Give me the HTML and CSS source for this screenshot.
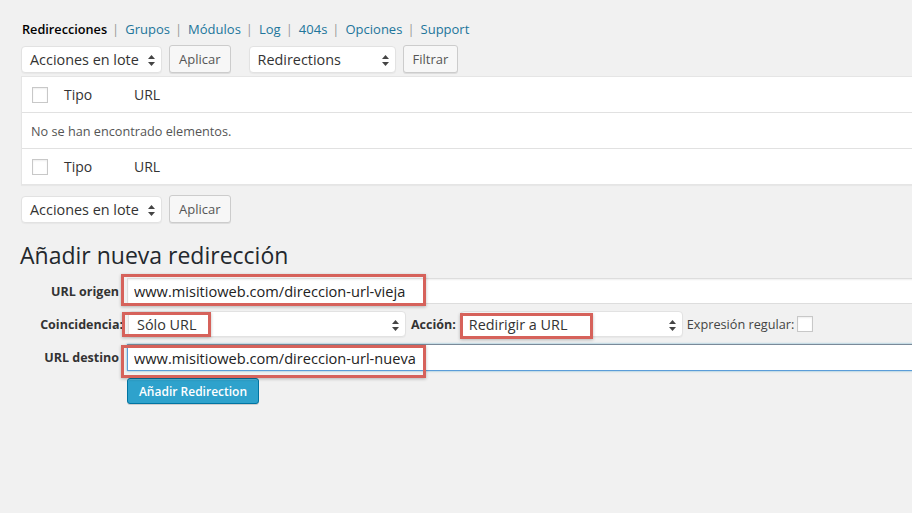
FILE: index.html
```html
<!DOCTYPE html>
<html lang="es">
<head>
    <meta charset="UTF-8">
    <meta name="viewport" content="width=device-width, initial-scale=1.0">
    <title>Redirection</title>
    <link rel="stylesheet" href="styles.css">
</head>
<body>
    <div class="wrap">
        <ul class="subsubsub">
            <li class="current">Redirecciones</li>
            <li><a href="#">Grupos</a></li>
            <li><a href="#">Módulos</a></li>
            <li><a href="#">Log</a></li>
            <li><a href="#">404s</a></li>
            <li><a href="#">Opciones</a></li>
            <li><a href="#">Support</a></li>
        </ul>

        <div class="tablenav top">
            <div class="select bulk">Acciones en lote <svg class="arrows" width="7" height="11" viewBox="0 0 7 11"><path d="M3.5 0L7 4H0z M3.5 11L0 7h7z" fill="#444"/></svg></div>
            <button class="button">Aplicar</button>
            <div class="select groups">Redirections <svg class="arrows" width="7" height="11" viewBox="0 0 7 11"><path d="M3.5 0L7 4H0z M3.5 11L0 7h7z" fill="#444"/></svg></div>
            <button class="button">Filtrar</button>
        </div>

        <div class="list-table">
            <div class="row head">
                <span class="check"></span>
                <span class="col-type">Tipo</span>
                <span class="col-url">URL</span>
            </div>
            <div class="row empty">No se han encontrado elementos.</div>
            <div class="row foot">
                <span class="check"></span>
                <span class="col-type">Tipo</span>
                <span class="col-url">URL</span>
            </div>
        </div>

        <div class="tablenav bottom">
            <div class="select bulk">Acciones en lote <svg class="arrows" width="7" height="11" viewBox="0 0 7 11"><path d="M3.5 0L7 4H0z M3.5 11L0 7h7z" fill="#444"/></svg></div>
            <button class="button">Aplicar</button>
        </div>

        <h2>Añadir nueva redirección</h2>

        <form class="add-form">
            <div class="form-row">
                <label class="lbl">URL origen</label>
                <div class="field">
                    <input class="text" type="text" value="www.misitioweb.com/direccion-url-vieja">
                    <span class="mark mark-source"></span>
                </div>
            </div>
            <div class="form-row options">
                <label class="lbl wide">Coincidencia:</label>
                <div class="field">
                    <div class="select match">Sólo URL <svg class="arrows" width="7" height="11" viewBox="0 0 7 11"><path d="M3.5 0L7 4H0z M3.5 11L0 7h7z" fill="#444"/></svg></div>
                    <span class="mark mark-match"></span>
                </div>
                <label class="lbl inline">Acción:</label>
                <div class="field">
                    <div class="select action">Redirigir a URL <svg class="arrows" width="7" height="11" viewBox="0 0 7 11"><path d="M3.5 0L7 4H0z M3.5 11L0 7h7z" fill="#444"/></svg></div>
                    <span class="mark mark-action"></span>
                </div>
                <span class="regex">Expresión regular:</span>
                <span class="check small"></span>
            </div>
            <div class="form-row">
                <label class="lbl">URL destino</label>
                <div class="field">
                    <input class="text focus" type="text" value="www.misitioweb.com/direccion-url-nueva">
                    <span class="mark mark-target"></span>
                </div>
            </div>
            <div class="form-row submit">
                <button class="button-primary" type="button">Añadir Redirection</button>
            </div>
        </form>
    </div>
</body>
</html>
```

FILE: styles.css
```css
body {
    margin: 0;
    background: #f1f1f1;
    font-family: 'Open Sans', 'Liberation Sans', sans-serif;
    color: #444;
    overflow: hidden;
}

.wrap {
    width: 1000px;
    padding: 19px 0 0 21px;
}

/* sub navigation */
.subsubsub {
    list-style: none;
    margin: 0;
    padding: 0;
    display: flex;
    font-size: 13px;
    line-height: 20px;
    color: #666;
}

.subsubsub li + li::before {
    content: "|";
    color: #999;
    margin: 0 6px 0 5px;
}

.subsubsub .current {
    color: #000;
    font-weight: 600;
    font-size: 12.7px;
    margin-left: 1px;
}

.subsubsub a {
    color: #21759b;
    text-decoration: none;
}

/* bulk actions bar */
.tablenav {
    display: flex;
    align-items: center;
    gap: 7px;
    height: 28px;
}

.tablenav.top {
    margin-top: 6px;
}

.tablenav.bottom {
    margin-top: 10px;
}

.select {
    position: relative;
    flex-shrink: 0;
    box-sizing: border-box;
    height: 27px;
    padding: 0 8px;
    display: flex;
    align-items: center;
    background: #fff;
    border: 1px solid #e2e2e2;
    border-radius: 4px;
    font-size: 14.4px;
    color: #333;
    box-shadow: 0 1px 1px rgba(0, 0, 0, 0.04);
}

.select .arrows {
    position: absolute;
    right: 6px;
    top: 8px;
}

.select.bulk {
    width: 141px;
}

.select.groups {
    width: 147px;
    margin-left: 11px;
}

.button {
    box-sizing: border-box;
    height: 28px;
    padding: 0 9px;
    background: #f7f7f7;
    border: 1px solid #ccc;
    border-radius: 3px;
    font-family: inherit;
    font-size: 13px;
    color: #555;
    box-shadow: 0 1px 0 #ddd;
}

/* list table */
.list-table {
    margin-top: 3px;
    background: #fff;
    border: 1px solid #e5e5e5;
    border-right: none;
    box-shadow: 0 1px 1px rgba(0, 0, 0, 0.04);
}

.row {
    display: flex;
    align-items: center;
    height: 35px;
    font-size: 14px;
    color: #333;
}

.row.head {
    border-bottom: 1px solid #e1e1e1;
}

.row.empty {
    height: 35px;
    padding-left: 9px;
    font-size: 12.7px;
    color: #555;
}

.row.foot {
    border-top: 1px solid #e1e1e1;
}

.check {
    flex-shrink: 0;
    box-sizing: border-box;
    width: 16px;
    height: 16px;
    background: #fff;
    border: 1px solid #c8c8c8;
    box-shadow: inset 0 1px 2px rgba(0, 0, 0, 0.07);
}

.row .check {
    margin-left: 10px;
}

.col-type {
    margin-left: 16px;
    width: 70px;
}

/* add form */
h2 {
    margin: 18px 0 0 -1px;
    font-size: 23px;
    font-weight: 400;
    line-height: 29px;
    color: #23282d;
}

.add-form {
    margin-top: 8px;
}

.form-row {
    display: flex;
    align-items: center;
    margin-bottom: 7px;
}

.lbl {
    flex-shrink: 0;
    width: 98px;
    margin-right: 8px;
    text-align: right;
    font-size: 12.5px;
    font-weight: 700;
    color: #333;
}

.lbl.wide {
    width: 102px;
    margin-right: 5px;
}

.lbl.inline {
    width: auto;
    margin: 0 4px 0 5px;
}

.field {
    position: relative;
    flex-shrink: 0;
}

.text {
    box-sizing: border-box;
    width: 900px;
    height: 26px;
    padding: 0 6px;
    border: 1px solid #ddd;
    background: #fff;
    font-family: inherit;
    font-size: 14.6px;
    color: #222;
    box-shadow: inset 0 1px 2px rgba(0, 0, 0, 0.07);
    outline: none;
}

.text.focus {
    height: 27px;
    border-color: #5b9dd9;
    border-top-color: #7a8a99;
    box-shadow: 0 0 2px rgba(30, 140, 190, 0.6);
}

.select.match {
    width: 278px;
    height: 26px;
}

.select.action {
    width: 223px;
    height: 26px;
}

.regex {
    flex-shrink: 0;
    margin-left: 4px;
    font-size: 12.7px;
    color: #444;
}

.check.small {
    margin-left: 3px;
}

/* highlight frames */
.mark {
    position: absolute;
    box-sizing: border-box;
    border: 3px solid #d6625b;
    box-shadow: 0 1px 3px rgba(0, 0, 0, 0.25);
    pointer-events: none;
}

.mark-source {
    left: -6px;
    top: -4px;
    width: 305px;
    height: 32px;
}

.mark-match {
    left: -6px;
    top: 1px;
    width: 89px;
    height: 25px;
}

.mark-action {
    left: 0;
    top: 2px;
    width: 133px;
    height: 26px;
}

.mark-target {
    left: -6px;
    top: 1px;
    width: 305px;
    height: 33px;
}

.form-row.submit {
    padding-left: 106px;
}

.button-primary {
    box-sizing: border-box;
    width: 132px;
    height: 26px;
    background: #2ea2cc;
    border: 1px solid #0074a2;
    border-radius: 3px;
    font-family: inherit;
    font-size: 12px;
    font-weight: 600;
    color: #fff;
    box-shadow: inset 0 1px 0 rgba(120, 200, 230, 0.5), 0 1px 0 rgba(0, 0, 0, 0.15);
}
```
